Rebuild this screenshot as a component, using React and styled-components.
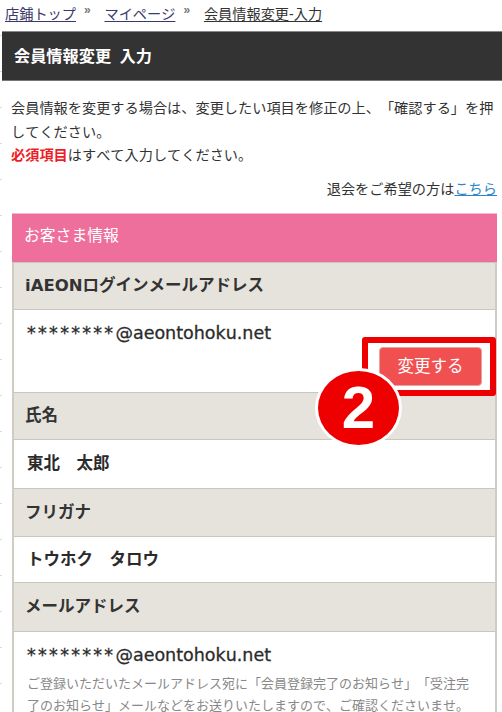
import React from 'react'
import styled, { createGlobalStyle } from 'styled-components'

const GlobalStyle = createGlobalStyle`
    html, body {
        margin: 0;
        padding: 0;
        height: 712px;
        overflow: hidden;
        background: #fff;
    }
    body {
        font-family: "Liberation Sans", "Noto Sans CJK JP", sans-serif;
        color: #333;
        text-spacing-trim: space-all;
        font-kerning: none;
    }
`
const Page = styled.div`
    width: 502px;
    height: 712px;
    overflow: hidden;
    padding-left: 2px;
    box-sizing: border-box;
    background: repeating-linear-gradient(to bottom, transparent 0, transparent 35px, #d8d8d8 35px, #d8d8d8 36px) left top / 2px 100% no-repeat;
`
const Breadcrumb = styled.nav`
    display: flex;
    align-items: center;
    height: 31px;
    padding: 0 0 6px 3px;
    box-sizing: border-box;
    font-size: 14.2px;
`
const Crumb = styled.a`
    color: ${(props) => (props.current ? '#333' : '#3a3a6a')};
    text-decoration: underline;
    text-underline-offset: 2px;
`
const Sep = styled.span`
    width: 28.5px;
    padding-left: 8px;
    box-sizing: border-box;
    font-size: 12px;
    font-weight: 700;
    color: #777;
    position: relative;
    top: -3px;
`
const Title = styled.h1`
    margin: 0;
    height: 50px;
    display: flex;
    align-items: center;
    padding: 0 0 3px 12px;
    background: #333;
    border-top: 1px solid #888;
    border-bottom: 1px solid #777;
    box-sizing: border-box;
    color: #fff;
    font-size: 16.2px;
    font-weight: 700;
    word-spacing: 4px;
`
const Lead = styled.p`
    margin: 0;
    padding: 16px 4px 0 9px;
    font-size: 14.2px;
    line-height: 23.5px;
    color: #333;
`
const Required = styled.strong`
    color: #ee1c25;
`
const Leave = styled.div`
    margin-top: 10px;
    padding-right: 5px;
    height: 23px;
    text-align: right;
    font-size: 14.2px;
    line-height: 23px;
`
const LeaveLink = styled.a`
    color: #2a86c8;
    text-decoration: underline;
`
const Table = styled.section`
    margin: 12px 5px 0 10px;
    border-left: 2px solid #cfccc4;
    border-right: 2px solid #cfccc4;
`
const PanelHead = styled.div`
    height: 49px;
    margin: 0 -2px;
    display: flex;
    align-items: center;
    padding: 0 0 6px 12px;
    background: #ee6f9b;
    border-top: 1px solid #f3b9cd;
    box-sizing: border-box;
    color: #fff;
    font-size: 15.8px;
`
const Label = styled.div`
    height: ${(props) => props.h || 48}px;
    display: flex;
    align-items: center;
    padding: 0 0 3px 11px;
    background: #e5e3dc;
    border-top: 1px solid #c9c7bf;
    border-bottom: 1px solid #c9c7bf;
    box-sizing: border-box;
    font-family: "DejaVu Sans", "Noto Sans CJK JP", sans-serif;
    font-size: 16.5px;
    font-weight: 700;
    color: #333;
`
const Cell = styled.div`
    height: ${(props) => props.h}px;
    padding: ${(props) => props.pt}px 12px 0 13px;
    box-sizing: border-box;
    font-size: 16.5px;
    font-weight: 700;
    line-height: 20px;
    color: #2b2b2b;
    position: relative;
`
const Mail = styled.div`
    font-family: "DejaVu Sans", "Liberation Sans", sans-serif;
    font-size: 17.5px;
    font-weight: 400;
    -webkit-text-stroke: 0.3px #2b2b2b;
`
const Mask = styled.span`
    letter-spacing: 2.3px;
`
const Note = styled.p`
    margin: 8px 0 0;
    padding-right: 8px;
    font-size: 13px;
    font-weight: 400;
    line-height: 22px;
    color: #888;
`
const ChangeButton = styled.button`
    position: absolute;
    top: 37px;
    right: 13px;
    width: 103px;
    height: 39px;
    padding: 0 0 3px;
    border: 1px solid #e8a0a0;
    border-radius: 4px;
    background: #f05050;
    color: #fff;
    font-family: inherit;
    font-size: 16.5px;
`
const Highlight = styled.div`
    position: absolute;
    top: 27px;
    right: -1px;
    width: 134px;
    height: 59px;
    border: 6px solid #ee0000;
    border-radius: 3px;
    box-sizing: border-box;
`
const Badge = styled.div`
    position: absolute;
    top: 58px;
    right: 93px;
    width: 87px;
    height: 80px;
    border-radius: 50%;
    background: #ee0000;
    border: 3px solid #fff;
    box-sizing: border-box;
    display: flex;
    align-items: center;
    justify-content: center;
    color: #fff;
    font-size: 60px;
    font-weight: 700;
    line-height: 1;
    z-index: 2;
`

const App = () => (
    <Page>
        <GlobalStyle />
        <Breadcrumb>
            <Crumb>店鋪トップ</Crumb>
            <Sep>»</Sep>
            <Crumb>マイページ</Crumb>
            <Sep>»</Sep>
            <Crumb current>会員情報変更-入力</Crumb>
        </Breadcrumb>
        <Title>会員情報変更 入力</Title>
        <Lead>
            会員情報を変更する場合は、変更したい項目を修正の上、「確認する」を押してください。
            <br />
            <Required>必須項目</Required>はすべて入力してください。
        </Lead>
        <Leave>
            退会をご希望の方は<LeaveLink>こちら</LeaveLink>
        </Leave>
        <Table>
            <PanelHead>お客さま情報</PanelHead>
            <Label>iAEONログインメールアドレス</Label>
            <Cell h={82} pt={13}>
                <Mail><Mask>********</Mask>@aeontohoku.net</Mail>
                <ChangeButton>変更する</ChangeButton>
                <Highlight />
                <Badge>2</Badge>
            </Cell>
            <Label>氏名</Label>
            <Cell h={48} pt={13}>東北　太郎</Cell>
            <Label h={49}>フリガナ</Label>
            <Cell h={45} pt={12}>トウホク　タロウ</Cell>
            <Label h={50}>メールアドレス</Label>
            <Cell h={100} pt={13}>
                <Mail><Mask>********</Mask>@aeontohoku.net</Mail>
                <Note>
                    ご登録いただいたメールアドレス宛に「会員登録完了のお知らせ」「受注完了のお知らせ」メールなどをお送りいたしますので、ご確認くださいませ。
                </Note>
            </Cell>
        </Table>
    </Page>
)

export default App
